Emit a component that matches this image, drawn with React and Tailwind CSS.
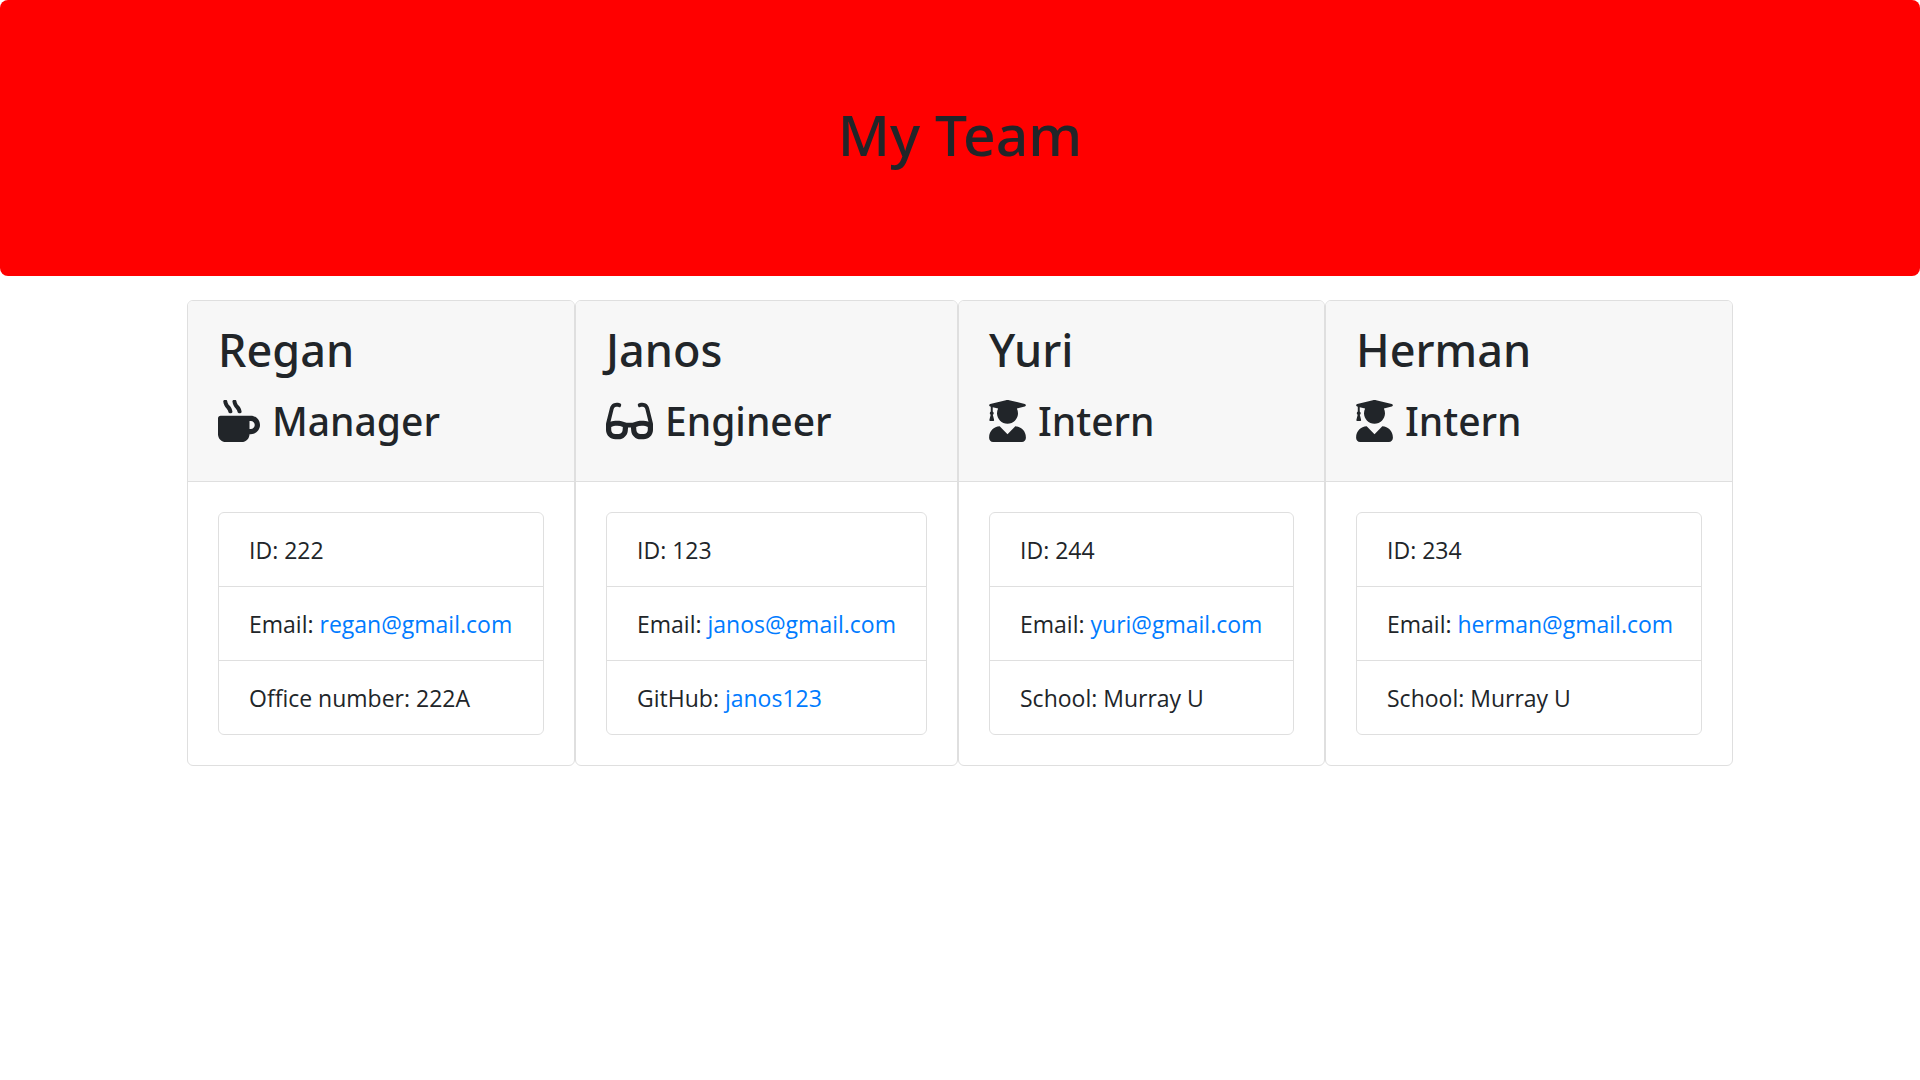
import { FaGlasses, FaMugHot, FaUserGraduate } from "react-icons/fa";

const roles = {
  Manager: { Icon: FaMugHot, size: "w-[42px]" },
  Engineer: { Icon: FaGlasses, size: "w-[47px]" },
  Intern: { Icon: FaUserGraduate, size: "w-[37px]" },
};

const team = [
  { name: "Regan", role: "Manager", id: "222", email: "regan@gmail.com", label: "Office number", value: "222A" },
  { name: "Janos", role: "Engineer", id: "123", email: "janos@gmail.com", label: "GitHub", value: "janos123", href: "https://github.com/janos123" },
  { name: "Yuri", role: "Intern", id: "244", email: "yuri@gmail.com", label: "School", value: "Murray U" },
  { name: "Herman", role: "Intern", id: "234", email: "herman@gmail.com", label: "School", value: "Murray U" },
];

function Row({ label, children }) {
  return (
    <li className="pt-[19px] pr-5 pb-[18px] pl-[30px] whitespace-nowrap">
      {label}: {children}
    </li>
  );
}

function TextLink({ href, children }) {
  return (
    <a href={href} className="text-[#007bff] hover:underline">
      {children}
    </a>
  );
}

function Card({ member }) {
  const { Icon, size } = roles[member.role];
  return (
    <article className="overflow-hidden rounded-md border border-[#dfdfdf] bg-white">
      <header className="border-b border-[#dfdfdf] bg-[#f7f7f7] px-[30px] pt-5 pb-[29px] font-['Noto_Sans',sans-serif] font-medium">
        <h2 className="mb-[11px] text-[45px] leading-[58px]">{member.name}</h2>
        <h3 className="flex items-center gap-3 text-[39px] leading-[62px]">
          <Icon className={`h-[42px] shrink-0 ${size}`} aria-hidden="true" />
          {member.role}
        </h3>
      </header>
      <div className="p-[30px]">
        <ul className="divide-y divide-[#dfdfdf] rounded-md border border-[#dfdfdf] text-[23px] leading-9">
          <Row label="ID">{member.id}</Row>
          <Row label="Email">
            <TextLink href={`mailto:${member.email}`}>{member.email}</TextLink>
          </Row>
          <Row label={member.label}>
            {member.href ? <TextLink href={member.href}>{member.value}</TextLink> : member.value}
          </Row>
        </ul>
      </div>
    </article>
  );
}

export default function App() {
  return (
    <div className="min-h-screen bg-white font-['Open_Sans',sans-serif] text-[#212529]">
      <header className="mb-6 rounded-lg bg-[#ff0000] px-12 pt-[98px] pb-[106px]">
        <h1 className="text-center font-['Noto_Sans',sans-serif] text-[57px] leading-[72px] font-medium">
          My Team
        </h1>
      </header>
      <main className="mx-auto grid max-w-[1546px] grid-cols-[388fr_383fr_367fr_408fr]">
        {team.map((member) => (
          <Card key={member.name} member={member} />
        ))}
      </main>
    </div>
  );
}
